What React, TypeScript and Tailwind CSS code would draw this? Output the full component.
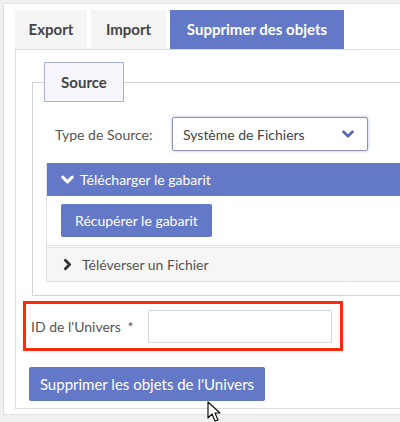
import { ChevronDown, ChevronRight } from "lucide-react"

const blue = "bg-[#6478c8]"

function Cursor() {
  return (
    <svg className="absolute left-[207px] top-[401px]" width="16" height="24" viewBox="0 0 16 24">
      <path d="M1 1 L1 17 L5 13 L8 20 L11 19 L8 12 L13 12 Z" fill="#fff" stroke="#111" strokeWidth="1.2" strokeLinejoin="round" />
    </svg>
  )
}

export default function App() {
  return (
    <div className="relative h-[422px] w-[400px] overflow-hidden bg-[#f1f1f1] pl-[3px] pt-[3px] font-['Lato','Liberation_Sans',sans-serif] text-[14px] text-[#555]">
      <div className="h-[412px] w-[420px] border border-[#e2e2e2] bg-white pl-[11px] pt-[6px]">
        {/* tabs */}
        <div className="flex gap-[4px]">
          <div className="flex h-[39px] w-[72px] items-center justify-center bg-[#f5f5f5] text-[15px] font-bold text-[#444]">Export</div>
          <div className="flex h-[39px] w-[75px] items-center justify-center bg-[#f5f5f5] text-[15px] font-bold text-[#444]">Import</div>
          <div className={`flex h-[39px] w-[174px] items-center justify-center ${blue} text-[15px] font-bold text-white`}>
            Supprimer des objets
          </div>
        </div>

        {/* tab panel */}
        <div className="h-[360px] w-[420px] border border-[#dedede] pl-[7px] pt-[12px]">
          <fieldset className="ml-[9px] w-[400px] border border-[#d4d4d4] pb-[13px] pl-[13px]">
            <legend className="-ml-[2px] flex h-[40px] w-[80px] items-center justify-center border border-[#aab0d6] bg-[#f6f6fc] text-[15px] font-bold text-[#444]">
              Source
            </legend>

            <div className="mt-[15px] flex items-center pl-[9px]">
              <span className="w-[117px] text-[14px] text-[#555]">Type de Source:</span>
              <div className="flex h-[34px] w-[196px] items-center justify-between rounded-[2px] border border-[#8c92b4] px-[10px] shadow-[0_0_3px_rgba(100,120,200,0.5)]">
                <span className="text-[14px] text-[#444]">Système de Fichiers</span>
                <ChevronDown className="h-[18px] w-[18px] text-[#5668b4]" strokeWidth={3.5} />
              </div>
            </div>

            {/* accordion */}
            <div className="mt-[12px] border-l border-[#e2e2e2]">
              <div className={`flex h-[33px] items-center gap-[3px] ${blue} pl-[11px] text-[14px] text-white`}>
                <ChevronDown className="h-[19px] w-[19px]" strokeWidth={4} />
                <span>Télécharger le gabarit</span>
              </div>
              <div className="border-b border-[#e2e2e2] pb-[8px] pl-[14px] pt-[8px]">
                <button className={`h-[33px] w-[151px] rounded-[2px] ${blue} text-[14px] text-white`}>Récupérer le gabarit</button>
              </div>
              <div className="mt-[1px] flex h-[35px] items-center gap-[6px] border-y border-[#e2e2e2] bg-[#f6f6f6] pl-[12px] text-[14px] text-[#555]">
                <ChevronRight className="h-[17px] w-[17px] text-[#333]" strokeWidth={4} />
                <span>Téléverser un Fichier</span>
              </div>
            </div>
          </fieldset>

          {/* ID row */}
          <div className="mt-[5px] flex h-[50px] w-[320px] items-center border-[3px] border-[#ff2a0a] pl-[5px]">
            <span className="w-[117px] text-[14px] text-[#555]">
              ID de l'Univers <span className="ml-[3px]">*</span>
            </span>
            <input className="h-[33px] w-[184px] rounded-[2px] border border-[#d8d8d8] bg-white outline-none" />
          </div>

          <button className={`ml-[6px] mt-[16px] h-[34px] w-[236px] rounded-[2px] ${blue} text-[15px] text-white`}>
            Supprimer les objets de l'Univers
          </button>
        </div>
      </div>
      <Cursor />
    </div>
  )
}
